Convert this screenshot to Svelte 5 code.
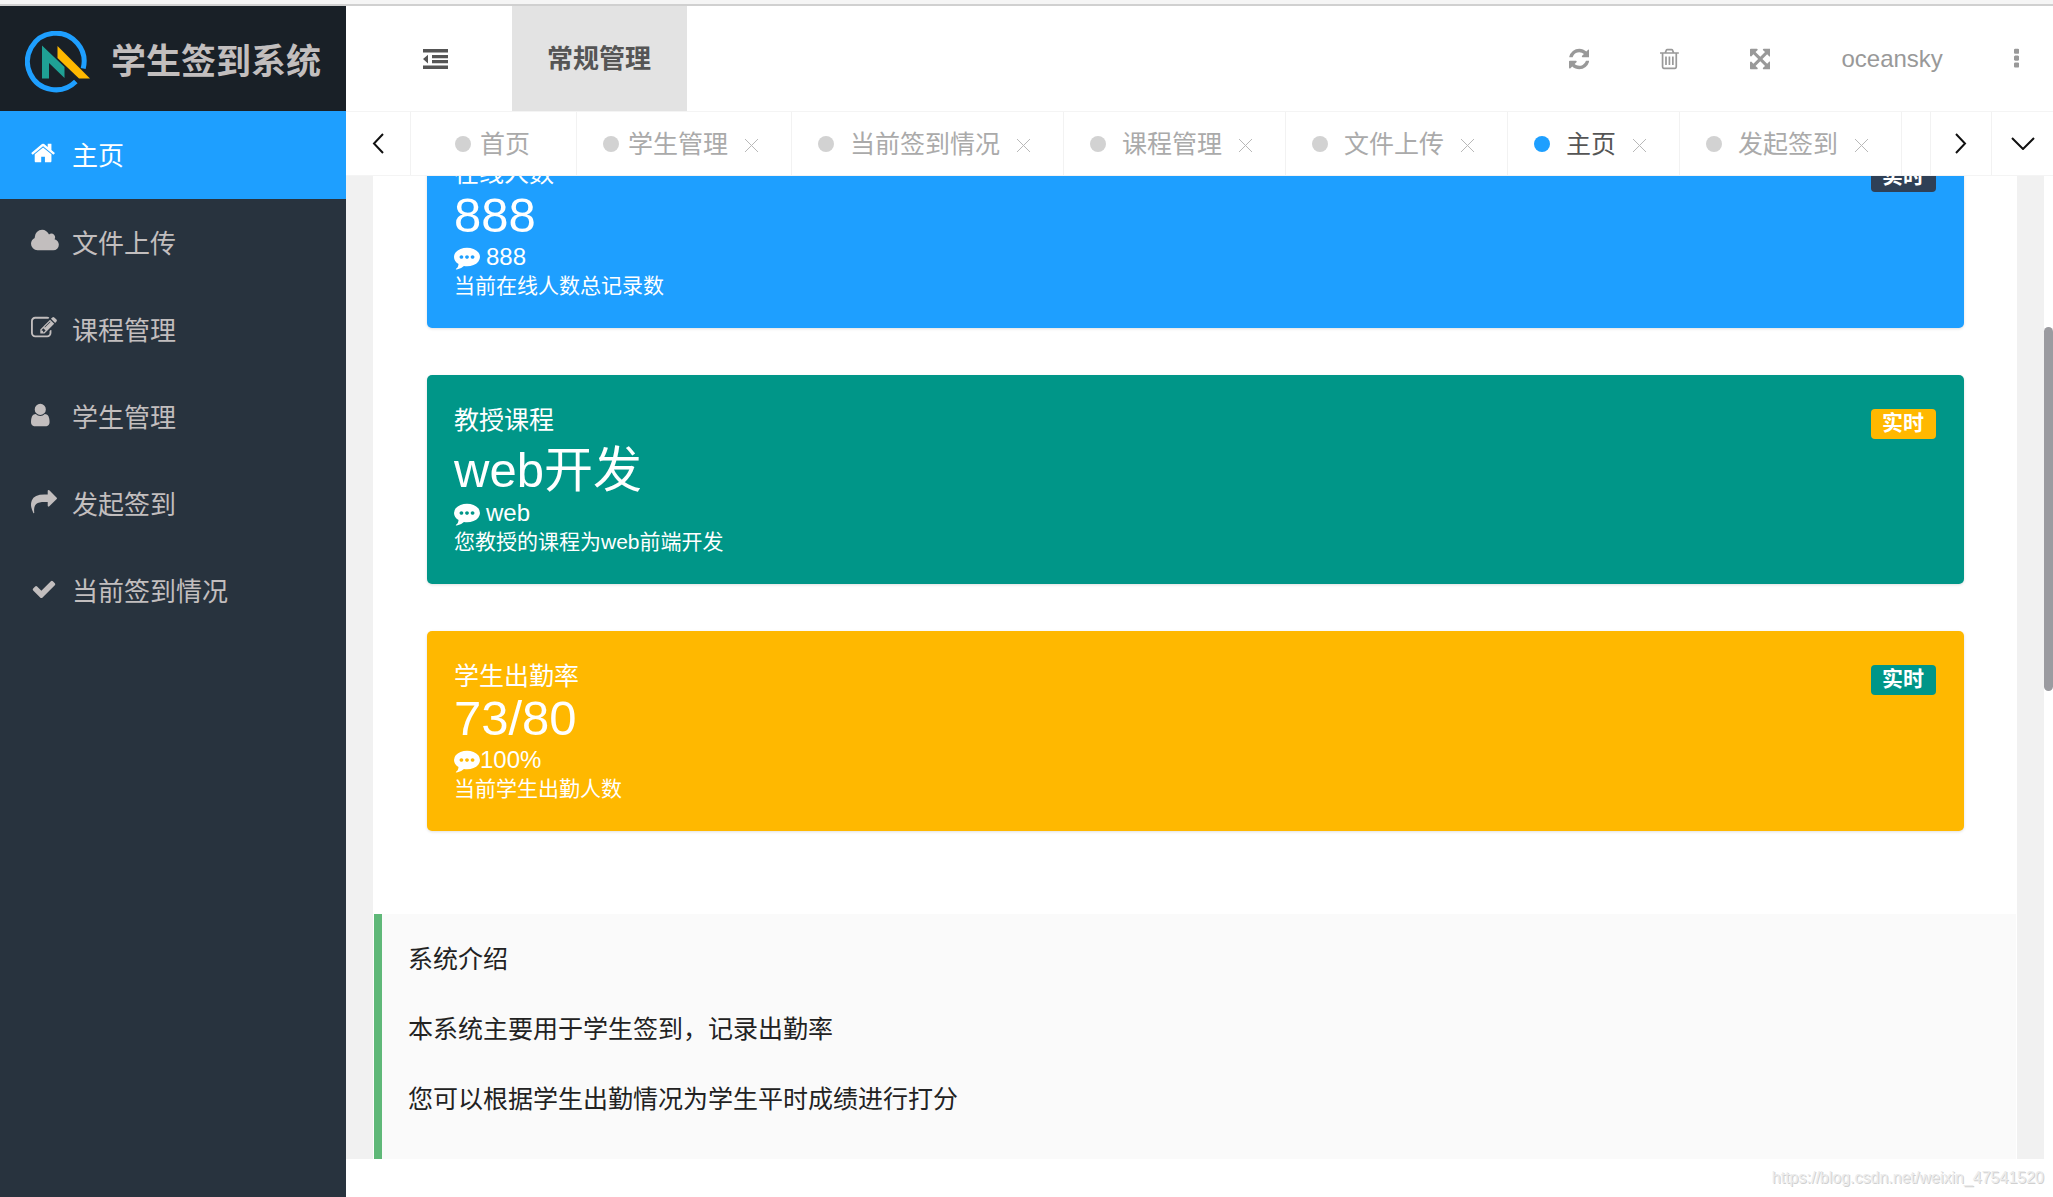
<script>
	// FontAwesome 4 glyphs, each with its own box so the widths stay proportional
	const icons = {
		home: {
			box: '64 0 1664 1792',
			d: 'M1472 992v480q0 26-19 45t-45 19h-384v-384h-256v384h-384q-26 0-45-19t-19-45v-480q0-1 .5-3t.5-3l575-474 575 474q1 2 1 6zm223-69l-62 74q-8 9-21 11h-3q-13 0-21-7l-692-577-692 577q-12 8-24 7-13-2-21-11l-62-74q-8-10-7-23.5t11-21.5l719-599q32-26 76-26t76 26l244 204v-195q0-14 9-23t23-9h192q14 0 23 9t9 23v408l219 182q10 8 11 21.5t-7 23.5z'
		},
		cloud: {
			box: '64 0 1920 1792',
			d: 'M1984 1152q0 159-112.5 271.5t-271.5 112.5h-1088q-185 0-316.5-131.5t-131.5-316.5q0-132 71-241.5t187-163.5q-2-28-2-43 0-212 150-362t362-150q158 0 286.5 88t187.5 230q70-62 166-62 106 0 181 75t75 181q0 75-41 138 129 30 213 134.5t84 239.5z'
		},
		edit: {
			box: '0 0 1792 1792',
			d: 'M888 1184l116-116-152-152-116 116v56h96v96h56zm440-720q-16-16-33 1l-350 350q-17 17-1 33t33-1l350-350q17-17 1-33zm80 594v190q0 119-84.5 203.5t-203.5 84.5h-832q-119 0-203.5-84.5t-84.5-203.5v-832q0-119 84.5-203.5t203.5-84.5h832q63 0 117 25 15 7 18 23 3 17-9 29l-49 49q-14 14-32 8-23-6-45-6h-832q-66 0-113 47t-47 113v832q0 66 47 113t113 47h832q66 0 113-47t47-113v-126q0-13 9-22l64-64q15-15 35-7t20 29zm-96-738l288 288-672 672h-288v-288zm444 132l-92 92-288-288 92-92q28-28 68-28t68 28l152 152q28 28 28 68t-28 68z'
		},
		user: {
			box: '256 0 1280 1792',
			d: 'M1536 1399q0 109-62.5 187t-150.5 78h-854q-88 0-150.5-78t-62.5-187q0-85 8.5-160.5t31.5-152 58.5-131 94-89 134.5-34.5q131 128 313 128t313-128q76 0 134.5 34.5t94 89 58.5 131 31.5 152 8.5 160.5zm-256-887q0 159-112.5 271.5t-271.5 112.5-271.5-112.5-112.5-271.5 112.5-271.5 271.5-112.5 271.5 112.5 112.5 271.5z'
		},
		share: {
			box: '0 0 1792 1792',
			d: 'M1792 640q0 26-19 45l-512 512q-19 19-45 19t-45-19-19-45v-256h-224q-98 0-175.5 6t-154 21.5-133 42.5-105.5 69.5-80 101-48.5 138.5-17.5 181q0 55 5 123 0 6 2.5 23.5t2.5 26.5q0 15-8.5 25t-23.5 10q-16 0-28-17-7-9-13-22t-13.5-30-10.5-24q-127-285-127-451 0-199 53-333 162-403 875-403h224v-256q0-26 19-45t45-19 45 19l512 512q19 19 19 45z'
		},
		check: {
			box: '0 0 1792 1792',
			d: 'M1671 566q0 40-28 68l-724 724-136 136q-28 28-68 28t-68-28l-136-136-362-362q-28-28-28-68t28-68l136-136q28-28 68-28t68 28l294 295 656-657q28-28 68-28t68 28l136 136q28 28 28 68z'
		},
		comment: {
			box: '0 0 1792 1792',
			d: 'M640 896q0-53-37.5-90.5t-90.5-37.5-90.5 37.5-37.5 90.5 37.5 90.5 90.5 37.5 90.5-37.5 37.5-90.5zm384 0q0-53-37.5-90.5t-90.5-37.5-90.5 37.5-37.5 90.5 37.5 90.5 90.5 37.5 90.5-37.5 37.5-90.5zm384 0q0-53-37.5-90.5t-90.5-37.5-90.5 37.5-37.5 90.5 37.5 90.5 90.5 37.5 90.5-37.5 37.5-90.5zm384 0q0 174-120 321.5t-326 233-450 85.5q-110 0-211-18-173 173-435 229-52 10-86 13-12 1-22-6t-13-18q-4-15 20-37 5-5 23.5-21.5t25.5-23.5 23.5-25.5 24-31.5 20.5-37 20-48 14.5-57.5 12.5-72.5q-146-90-229.5-216.5t-83.5-269.5q0-174 120-321.5t326-233 450-85.5 450 85.5 326 233 120 321.5z'
		},
		refresh: {
			box: '128 0 1536 1792',
			d: 'M1639 1056q0 5-1 7-64 268-268 434.5t-478 166.5q-146 0-282.5-55t-243.5-157l-129 129q-19 19-45 19t-45-19-19-45v-448q0-26 19-45t45-19h448q26 0 45 19t19 45-19 45l-137 137q71 66 161 102t187 36q134 0 250-65t186-179q11-17 53-117 8-23 30-23h192q13 0 22.5 9.5t9.5 22.5zm25-800v448q0 26-19 45t-45 19h-448q-26 0-45-19t-19-45 19-45l138-138q-148-137-349-137-134 0-250 65t-186 179q-11 17-53 117-8 23-30 23h-199q-13 0-22.5-9.5t-9.5-22.5v-7q65-268 270-434.5t480-166.5q146 0 284 55.5t245 156.5l130-129q19-19 45-19t45 19 19 45z'
		},
		trash: {
			box: '192 0 1408 1792',
			d: 'M704 736v576q0 14-9 23t-23 9h-64q-14 0-23-9t-9-23v-576q0-14 9-23t23-9h64q14 0 23 9t9 23zm256 0v576q0 14-9 23t-23 9h-64q-14 0-23-9t-9-23v-576q0-14 9-23t23-9h64q14 0 23 9t9 23zm256 0v576q0 14-9 23t-23 9h-64q-14 0-23-9t-9-23v-576q0-14 9-23t23-9h64q14 0 23 9t9 23zm128 724v-948h-896v948q0 22 7 40.5t14.5 27 10.5 8.5h832q3 0 10.5-8.5t14.5-27 7-40.5zm-672-1076h448l-48-117q-7-9-17-11h-317q-10 2-17 11zm928 32v64q0 14-9 23t-23 9h-96v948q0 83-47 143.5t-113 60.5h-832q-66 0-113-58.5t-47-141.5v-952h-96q-14 0-23-9t-9-23v-64q0-14 9-23t23-9h309l70-167q15-37 54-63t79-26h320q40 0 79 26t54 63l70 167h309q14 0 23 9t9 23z'
		},
		expand: {
			box: '128 0 1536 1792',
			d: 'M1411 541l-355 355 355 355 144-144q29-31 70-14 39 17 39 59v448q0 26-19 45t-45 19h-448q-42 0-59-40-17-39 14-69l144-144-355-355-355 355 144 144q31 30 14 69-17 40-59 40h-448q-26 0-45-19t-19-45v-448q0-42 40-59 39-17 69 14l144 144 355-355-355-355-144 144q-19 19-45 19-12 0-24-5-40-17-40-59v-448q0-26 19-45t45-19h448q42 0 59 40 17 39-14 69l-144 144 355 355 355-355-144-144q-31-30-14-69 17-40 59-40h448q26 0 45 19t19 45v448q0 42-39 59-13 5-25 5-26 0-45-19z'
		},
		more: {
			box: '704 0 384 1792',
			d: 'M1088 1248v192q0 40-28 68t-68 28h-192q-40 0-68-28t-28-68v-192q0-40 28-68t68-28h192q40 0 68 28t28 68zm0-512v192q0 40-28 68t-68 28h-192q-40 0-68-28t-28-68v-192q0-40 28-68t68-28h192q40 0 68 28t28 68zm0-512v192q0 40-28 68t-68 28h-192q-40 0-68-28t-28-68v-192q0-40 28-68t68-28h192q40 0 68 28t28 68z'
		}
	};

	const menu = [
		{ icon: 'home', label: '主页' },
		{ icon: 'cloud', label: '文件上传' },
		{ icon: 'edit', label: '课程管理' },
		{ icon: 'user', label: '学生管理' },
		{ icon: 'share', label: '发起签到' },
		{ icon: 'check', label: '当前签到情况' }
	];

	const tabs = [
		{ label: '首页', kind: 'fixed' },
		{ label: '学生管理', kind: 'near' },
		{ label: '当前签到情况' },
		{ label: '课程管理' },
		{ label: '文件上传' },
		{ label: '主页' },
		{ label: '发起签到' }
	];

	const cards = [
		{ color: 'blue', badge: 'navy', title: '在线人数', value: '888', note: '888', spaced: true, desc: '当前在线人数总记录数' },
		{ color: 'green', badge: 'orange', title: '教授课程', value: 'web开发', note: 'web', spaced: true, tall: true, desc: '您教授的课程为web前端开发' },
		{ color: 'orange', badge: 'green', title: '学生出勤率', value: '73/80', note: '100%', desc: '当前学生出勤人数' }
	];

	let activeMenu = $state(0);
	let activeTab = $state(5);
</script>

{#snippet icon(name)}
	<svg class="icon" viewBox={icons[name].box} aria-hidden="true"><path d={icons[name].d} /></svg>
{/snippet}

<div class="page">
	<div class="browser-edge"></div>

	<div class="layout">
		<aside class="sidebar">
			<div class="brand">
				<svg class="logo" viewBox="0 0 66 62" aria-hidden="true">
					<path d="M58.2 37.5A28.3 28.3 0 1 0 50.8 50.5" fill="none" stroke="#1e9fff" stroke-width="5" />
					<path d="M17 14.5L39.5 36V47L24 32V47.5H17Z" fill="#1fa195" />
					<path d="M32.5 15L65 47.5H54L32.5 27Z" fill="#ffb800" />
				</svg>
				<h1>学生签到系统</h1>
			</div>
			<nav>
				<ul>
					{#each menu as item, i}
						<li class:active={i === activeMenu}>
							<a href="#menu-{i}" onclick={() => (activeMenu = i)}>
								<span class="menu-icon">{@render icon(item.icon)}</span>
								{item.label}
							</a>
						</li>
					{/each}
				</ul>
			</nav>
		</aside>

		<div class="main">
			<header class="header">
				<button class="fold" aria-label="收起菜单">
					<svg viewBox="0 0 25 20" aria-hidden="true">
						<path d="M0 0H25V3.5H0ZM9 6H25V9.3H9ZM9 11H25V14.3H9ZM0 16.5H25V20H0ZM0 10L5 5.8V14.6Z" />
					</svg>
				</button>
				<a class="module" href="#module">常规管理</a>
				<div class="tools">
					<button aria-label="刷新">{@render icon('refresh')}</button>
					<button aria-label="清理">{@render icon('trash')}</button>
					<button aria-label="全屏">{@render icon('expand')}</button>
					<a href="#user">oceansky</a>
					<button aria-label="更多">{@render icon('more')}</button>
				</div>
			</header>

			<div class="tabbar">
				<button class="roll prev" aria-label="向左">
					<svg width="12" height="21" viewBox="0 0 12 21" aria-hidden="true"><path d="M11 1L2 10.5L11 20" /></svg>
				</button>
				<ul class="tabs">
					{#each tabs as tab, i}
						<li class="tab {tab.kind ?? ''}" class:current={i === activeTab}>
							<a href="#tab-{i}" onclick={() => (activeTab = i)}><i class="dot"></i><span>{tab.label}</span></a>
							{#if tab.kind !== 'fixed'}
								<button class="close" aria-label="关闭">
									<svg width="15" height="15" viewBox="0 0 15 15" aria-hidden="true"><path d="M1 1L14 14M14 1L1 14" /></svg>
								</button>
							{/if}
						</li>
					{/each}
				</ul>
				<button class="roll next" aria-label="向右">
					<svg width="12" height="21" viewBox="0 0 12 21" aria-hidden="true"><path d="M1 1L10 10.5L1 20" /></svg>
				</button>
				<button class="roll" aria-label="标签操作">
					<svg width="24" height="13" viewBox="0 0 24 13" aria-hidden="true"><path d="M1 1L12 12L23 1" /></svg>
				</button>
			</div>

			<div class="body">
				<div class="panel">
					<div class="cards">
						{#each cards as card}
							<section class="card {card.color}">
								<div class="card-head">
									<h2>{card.title}</h2>
									<span class="badge {card.badge}">实时</span>
								</div>
								<p class="value" class:tall={card.tall}>{card.value}</p>
								<p class="note" class:spaced={card.spaced}>{@render icon('comment')}{card.note}</p>
								<p class="desc">{card.desc}</p>
							</section>
						{/each}
					</div>
					<blockquote>
						<p>系统介绍</p>
						<p>本系统主要用于学生签到，记录出勤率</p>
						<p>您可以根据学生出勤情况为学生平时成绩进行打分</p>
					</blockquote>
				</div>
				<div class="thumb"></div>
			</div>

			<footer>https://blog.csdn.net/weixin_47541520</footer>
		</div>
	</div>
</div>

<style>
	:global(body) {
		font-family: "Liberation Sans", "Noto Sans CJK SC", sans-serif;
		font-size: 24px;
		background: #fff;
	}

	.page,
	.page * {
		box-sizing: border-box;
	}

	h1, h2, p, ul, blockquote {
		margin: 0;
		padding: 0;
		font-weight: 400;
		list-style: none;
	}

	a {
		color: inherit;
		text-decoration: none;
	}

	button {
		padding: 0;
		border: 0;
		background: none;
		font: inherit;
		color: inherit;
		cursor: pointer;
	}

	svg {
		display: block;
	}

	.icon {
		height: 24px;
		fill: currentColor;
	}

	.page {
		display: flex;
		flex-direction: column;
		height: 100vh;
		overflow: hidden;
	}

	.browser-edge {
		flex: none;
		height: 6px;
		background: #f5f5f5;
		border-bottom: 2px solid #d0d0d0;
	}

	.layout {
		display: flex;
		flex: 1;
		min-height: 0;
	}

	/* ── Sidebar ── */
	.sidebar {
		flex: none;
		width: 346px;
		background: #28333e;
		color: #c2bebe;
	}

	.brand {
		display: flex;
		align-items: center;
		gap: 20px;
		height: 105px;
		padding: 7px 0 0 25px;
		background: #192027;
	}

	.logo {
		width: 66px;
		height: 62px;
	}

	.brand h1 {
		font-size: 35px;
		font-weight: 700;
		line-height: 48px;
	}

	nav a {
		display: flex;
		align-items: center;
		height: 87px;
		padding: 0 0 3px 31px;
		font-size: 26px;
	}

	.menu-icon {
		width: 41px;
	}

	.menu-icon .icon {
		height: 26px;
	}

	nav .active {
		border-bottom: 1px solid #1e9fff;
		background: #1e9fff;
		color: #fff;
	}

	/* ── Header ── */
	.main {
		display: flex;
		flex: 1;
		flex-direction: column;
		min-width: 0;
	}

	.header {
		display: flex;
		flex: none;
		height: 105px;
	}

	.fold {
		width: 166px;
		padding-left: 77px;
	}

	.fold svg {
		width: 25px;
		height: 20px;
		fill: #555;
	}

	.module {
		padding: 0 36px 0 35px;
		background: #e3e3e3;
		color: #555;
		font-size: 26px;
		font-weight: 700;
		line-height: 107px;
	}

	.tools {
		display: flex;
		align-items: center;
		gap: 71px;
		margin-left: auto;
		padding-right: 34px;
		color: #999;
	}

	/* ── Tabs ── */
	.tabbar {
		display: flex;
		flex: none;
		height: 65px;
		border-top: 1px solid #f4f4f4;
		border-bottom: 1px solid #f4f4f4;
	}

	.roll {
		display: flex;
		flex: none;
		align-items: center;
		justify-content: center;
		width: 62px;
		border-left: 1px solid #f2f2f2;
	}

	.roll.next {
		width: 61px;
	}

	.roll.prev {
		width: 65px;
		border-right: 1px solid #f2f2f2;
		border-left: 0;
	}

	.roll path {
		fill: none;
		stroke: #111;
		stroke-width: 2;
	}

	.tabs {
		display: flex;
		flex: 1;
		min-width: 0;
		overflow: hidden;
	}

	.tab {
		display: flex;
		flex: none;
		align-items: center;
		gap: 16px;
		padding: 0 32px 0 26px;
		border-right: 1px solid #f2f2f2;
		color: #aaa;
		font-size: 25px;
	}

	.tab a {
		display: flex;
		align-items: center;
		gap: 16px;
	}

	.tab span {
		padding-bottom: 3px;
	}

	.tab.fixed {
		padding: 0 46px 0 44px;
	}

	.tab.fixed a,
	.tab.near a {
		gap: 9px;
	}

	.dot {
		width: 16px;
		height: 16px;
		border-radius: 50%;
		background: #d2d2d2;
	}

	.tab.current {
		color: #555;
	}

	.current .dot {
		background: #1e9fff;
	}

	.close {
		padding-top: 4px;
	}

	.close path {
		stroke: #b8b8b8;
	}

	/* ── Content ── */
	.body {
		position: relative;
		display: flex;
		flex: 1;
		min-height: 0;
		margin-right: 9px;
		padding: 0 27px;
		background: #f1f1f1;
	}

	.panel {
		display: flex;
		flex: 1;
		flex-direction: column;
		overflow: hidden;
		padding: 0 1px;
		background: #fff;
	}

	/* scrolled down by 48px */
	.cards {
		display: flex;
		flex: none;
		flex-direction: column;
		gap: 47px;
		margin-top: -48px;
		padding: 0 52px 83px 53px;
	}

	.card {
		padding: 28px 28px 30px 27px;
		border-radius: 5px;
		box-shadow: 0 1px 3px rgba(0, 0, 0, 0.12);
		color: #fff;
	}

	.card-head {
		display: flex;
		justify-content: space-between;
		height: 35px;
		line-height: 35px;
	}

	.card-head h2 {
		font-size: 25px;
	}

	.badge {
		height: 30px;
		margin-top: 6px;
		padding: 0 12px 0 11px;
		border-radius: 4px;
		font-size: 21px;
		font-weight: 700;
		line-height: 28px;
	}

	.blue { background: #1e9fff; }
	.green { background: #009688; }
	.orange { background: #ffb800; }
	.navy { background: #2f4056; }

	.value {
		font-size: 49px;
		line-height: 49px;
	}

	.value.tall {
		padding: 8px 0 1px;
	}

	.note {
		display: flex;
		align-items: center;
		line-height: 34px;
	}

	.note .icon {
		height: 26px;
	}

	.note.spaced {
		gap: 6px;
	}

	.desc {
		font-size: 21px;
		line-height: 24px;
	}

	blockquote {
		flex: 1;
		padding: 28px 26px;
		border-left: 8px solid #5fb878;
		background: #fafafa;
		color: #222;
		font-size: 25px;
		line-height: 35px;
	}

	blockquote p {
		margin-bottom: 35px;
	}

	/* scrollbar thumb lies in the gutter beside the body */
	.thumb {
		position: absolute;
		top: 151px;
		right: -9px;
		width: 9px;
		height: 364px;
		border-radius: 5px;
		background: #9b9ba0;
	}

	footer {
		flex: none;
		height: 38px;
		padding-right: 9px;
		color: #ececec;
		font-size: 16px;
		line-height: 38px;
		text-align: right;
		text-shadow: 1px 1px 0 #d0d0d0;
	}
</style>
